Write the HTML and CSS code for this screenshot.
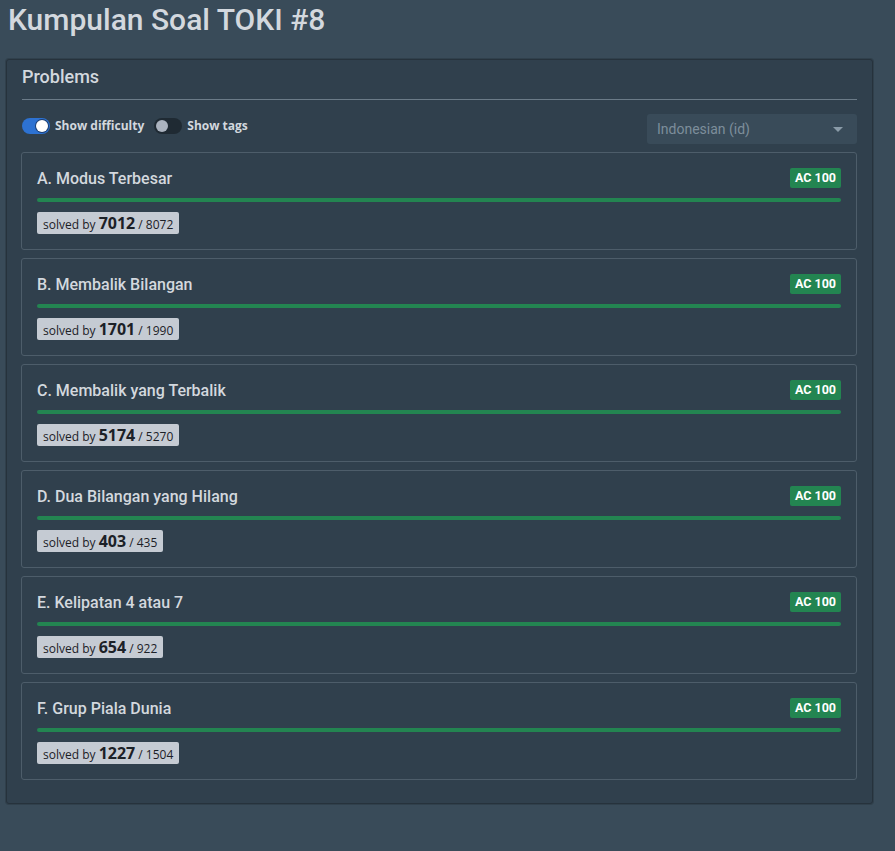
FILE: index.html
```html
<!DOCTYPE html>
<html lang="id">
<head>
<meta charset="utf-8">
<title>Kumpulan Soal TOKI #8</title>
<link rel="stylesheet" href="styles.css">
</head>
<body>
<div class="page">
  <h1 class="page-title">Kumpulan Soal TOKI #8</h1>
  <section class="panel">
    <h2 class="panel-title">Problems</h2>
    <div class="controls">
      <div class="switches">
        <label class="switch"><span class="track on"><span class="knob"></span></span><span class="switch-label">Show difficulty</span></label>
        <label class="switch"><span class="track"><span class="knob"></span></span><span class="switch-label">Show tags</span></label>
      </div>
      <div class="select"><span>Indonesian (id)</span><span class="caret"></span></div>
    </div>
    <div class="problems">
      <div class="problem">
        <div class="problem-head"><span class="problem-name">A. Modus Terbesar</span><span class="badge">AC 100</span></div>
        <div class="bar"></div>
        <span class="solved">solved by <b>7012</b> / 8072</span>
      </div>
      <div class="problem">
        <div class="problem-head"><span class="problem-name">B. Membalik Bilangan</span><span class="badge">AC 100</span></div>
        <div class="bar"></div>
        <span class="solved">solved by <b>1701</b> / 1990</span>
      </div>
      <div class="problem">
        <div class="problem-head"><span class="problem-name">C. Membalik yang Terbalik</span><span class="badge">AC 100</span></div>
        <div class="bar"></div>
        <span class="solved">solved by <b>5174</b> / 5270</span>
      </div>
      <div class="problem">
        <div class="problem-head"><span class="problem-name">D. Dua Bilangan yang Hilang</span><span class="badge">AC 100</span></div>
        <div class="bar"></div>
        <span class="solved">solved by <b>403</b> / 435</span>
      </div>
      <div class="problem">
        <div class="problem-head"><span class="problem-name">E. Kelipatan 4 atau 7</span><span class="badge">AC 100</span></div>
        <div class="bar"></div>
        <span class="solved">solved by <b>654</b> / 922</span>
      </div>
      <div class="problem">
        <div class="problem-head"><span class="problem-name">F. Grup Piala Dunia</span><span class="badge">AC 100</span></div>
        <div class="bar"></div>
        <span class="solved">solved by <b>1227</b> / 1504</span>
      </div>
    </div>
  </section>
</div>
</body>
</html>
```
FILE: styles.css
```css
* { box-sizing: border-box; }
html, body { margin: 0; padding: 0; }
body {
  background: #394b59;
  font-family: Roboto, "Liberation Sans", sans-serif;
  color: #d3d8de;
  min-height: 851px;
}
.page { padding: 0 6px; width: 879px; }
.page-title {
  margin: 2px 0 21px 2px;
  font-size: 30px;
  line-height: 36px;
  font-weight: 500;
  color: #d3d8de;
}
.panel {
  background: #30404d;
  border: 1px solid #26323c;
  border-radius: 3px;
  padding: 5px 15px 23px;
  box-shadow: 0 0 0 1px rgba(16,22,26,0.2);
}
.panel-title {
  margin: 0;
  font-size: 18px;
  line-height: 24px;
  font-weight: 500;
  padding-bottom: 10px;
  border-bottom: 1px solid #6b7b88;
}
.controls {
  display: flex;
  justify-content: space-between;
  align-items: flex-start;
  margin: 14px 0 8px;
}
.switches { display: flex; gap: 10px; padding-top: 3px; }
.switch { display: flex; align-items: center; gap: 5px; cursor: pointer; }
.track {
  width: 28px; height: 16px; border-radius: 8px;
  background: #1f2a33;
  position: relative;
  display: block;
}
.track.on { background: #2d72d2; }
.knob {
  position: absolute; top: 2px; left: 2px;
  width: 12px; height: 12px; border-radius: 50%;
  background: #abb3bf;
}
.track.on .knob { left: 14px; background: #fff; box-shadow: 0 0 0 1px #1c3f73; }
.switch-label {
  font-family: "Open Sans", sans-serif;
  font-weight: 700;
  font-size: 12px;
  color: #d3d8de;
}
.select {
  width: 210px; height: 30px;
  background: #394b59;
  border-radius: 3px;
  display: flex; align-items: center; justify-content: space-between;
  padding: 0 14px 0 10px;
  font-size: 14px;
  color: #7d8e9b;
}
.caret {
  width: 0; height: 0;
  border-left: 5px solid transparent;
  border-right: 5px solid transparent;
  border-top: 5px solid #8a9ba8;
}
.problems { display: flex; flex-direction: column; gap: 8px; margin-left: -1px; }
.problem {
  border: 1px solid #4d5d6a;
  border-radius: 3px;
  padding: 15px;
  display: flex; flex-direction: column; align-items: flex-start;
}
.problem-head {
  width: 100%;
  display: flex; justify-content: space-between; align-items: center;
  height: 20px;
}
.problem-name { font-size: 16px; font-weight: 500; color: #d3d8de; }
.badge {
  background: #238551;
  color: #fff;
  font-size: 12.5px;
  font-weight: 700;
  height: 20px;
  line-height: 20px;
  padding: 0 5px;
  border-radius: 2px;
}
.bar {
  width: 100%; height: 4px;
  background: #238551;
  border-radius: 2px;
  margin: 10px 0 10px;
}
.solved {
  background: #c5cbd3;
  color: #1c2127;
  font-family: "Open Sans", sans-serif;
  font-size: 12px;
  height: 22px;
  line-height: 22px;
  padding: 0 6px;
  border-radius: 2px;
  white-space: nowrap;
}
.solved b { font-size: 16px; font-weight: 700; }
```
